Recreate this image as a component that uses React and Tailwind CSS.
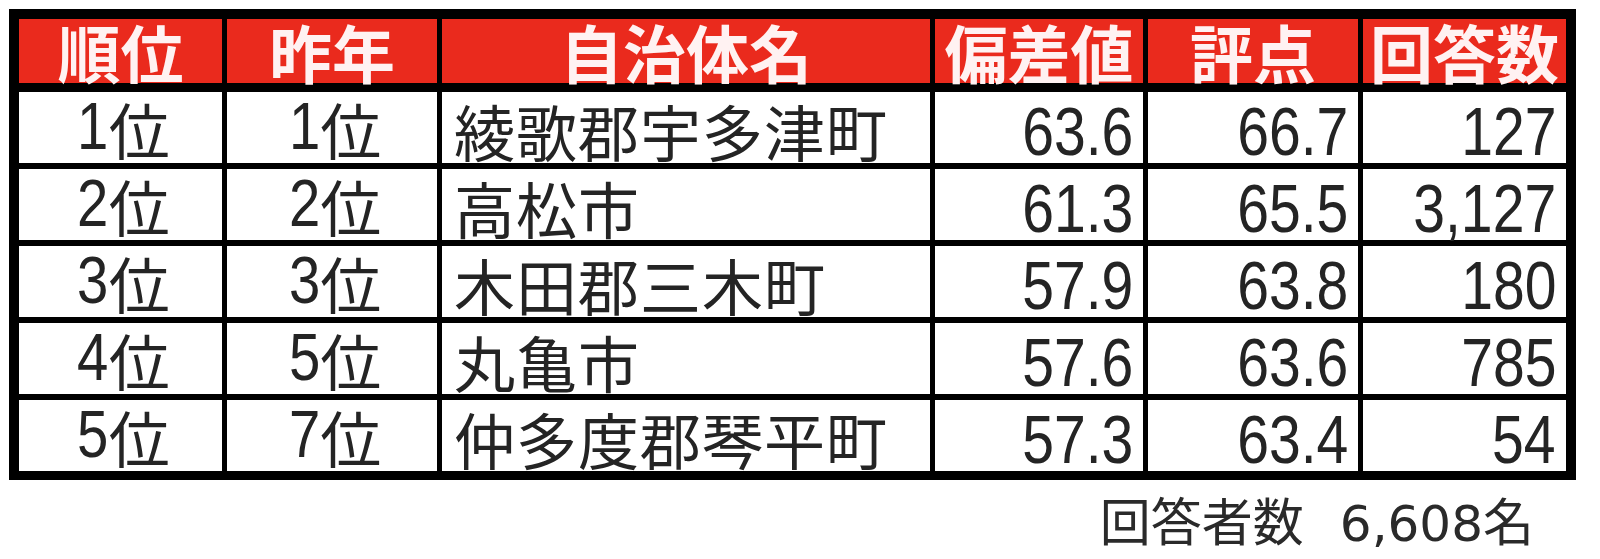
import React from "react";

const rows = [
  { r: "1", p: "1", name: "綾歌郡宇多津町", dev: "63.6", score: "66.7", n: "127" },
  { r: "2", p: "2", name: "高松市", dev: "61.3", score: "65.5", n: "3,127" },
  { r: "3", p: "3", name: "木田郡三木町", dev: "57.9", score: "63.8", n: "180" },
  { r: "4", p: "5", name: "丸亀市", dev: "57.6", score: "63.6", n: "785" },
  { r: "5", p: "7", name: "仲多度郡琴平町", dev: "57.3", score: "63.4", n: "54" },
];

const headers = ["順位", "昨年", "自治体名", "偏差値", "評点", "回答数"];

function Rank({ v }) {
  return (
    <div className="bg-white flex items-center justify-center pt-[6px] text-[#242424]">
      <div className="flex items-baseline">
        <span className="relative top-[-6px] inline-block scale-x-[0.84] origin-right font-['Liberation_Sans',sans-serif] text-[67px] leading-[60px]">{v}</span>
        <span className="inline-block font-['Noto_Sans_CJK_JP',sans-serif] text-[61px] leading-[60px]">位</span>
      </div>
    </div>
  );
}

function Num({ v }) {
  return (
    <div className="bg-white flex items-center justify-end pr-[10px] pt-[6px] text-[#242424]">
      <span className="inline-block scale-x-[0.84] origin-right font-['Liberation_Sans',sans-serif] text-[68px] leading-[60px]">{v}</span>
    </div>
  );
}

export default function App() {
  return (
    <div className="w-[1600px] h-[559px] bg-white overflow-hidden">
      <div className="ml-[9px] mt-[9px] w-[1567px]">
        <div className="grid grid-cols-[203px_210px_488px_208px_210px_203px] grid-rows-[67px_71px_71px_71px_71px_71px] gap-x-[5px] gap-y-[6px] bg-black border-t-[10px] border-x-[10px] border-b-[9px] border-black">
          {headers.map((h) => (
            <div
              key={h}
              className="bg-[#ea2a1d] border-b-[3px] border-black flex items-center justify-center font-['Noto_Sans_CJK_JP',sans-serif] font-bold text-[63px] leading-[60px] text-[#fff2f2]"
            >
              {h}
            </div>
          ))}
          {rows.map((row) => (
            <React.Fragment key={row.r}>
              <Rank v={row.r} />
              <Rank v={row.p} />
              <div className="bg-white flex items-center pl-[12px] pt-[6px] font-['Noto_Sans_CJK_JP',sans-serif] text-[61px] tracking-[1px] leading-[60px] text-[#242424]">
                {row.name}
              </div>
              <Num v={row.dev} />
              <Num v={row.score} />
              <Num v={row.n} />
            </React.Fragment>
          ))}
        </div>
        <div className="mt-[14px] flex justify-end items-baseline pr-[42px] leading-none text-[#2a2a2a]">
          <span className="font-['Noto_Sans_CJK_JP',sans-serif] text-[51px] leading-none">回答者数</span>
          <span className="ml-[36px] font-['DejaVu_Sans',sans-serif] text-[50px] leading-none">6,608</span>
          <span className="font-['Noto_Sans_CJK_JP',sans-serif] text-[51px] leading-none">名</span>
        </div>
      </div>
    </div>
  );
}
